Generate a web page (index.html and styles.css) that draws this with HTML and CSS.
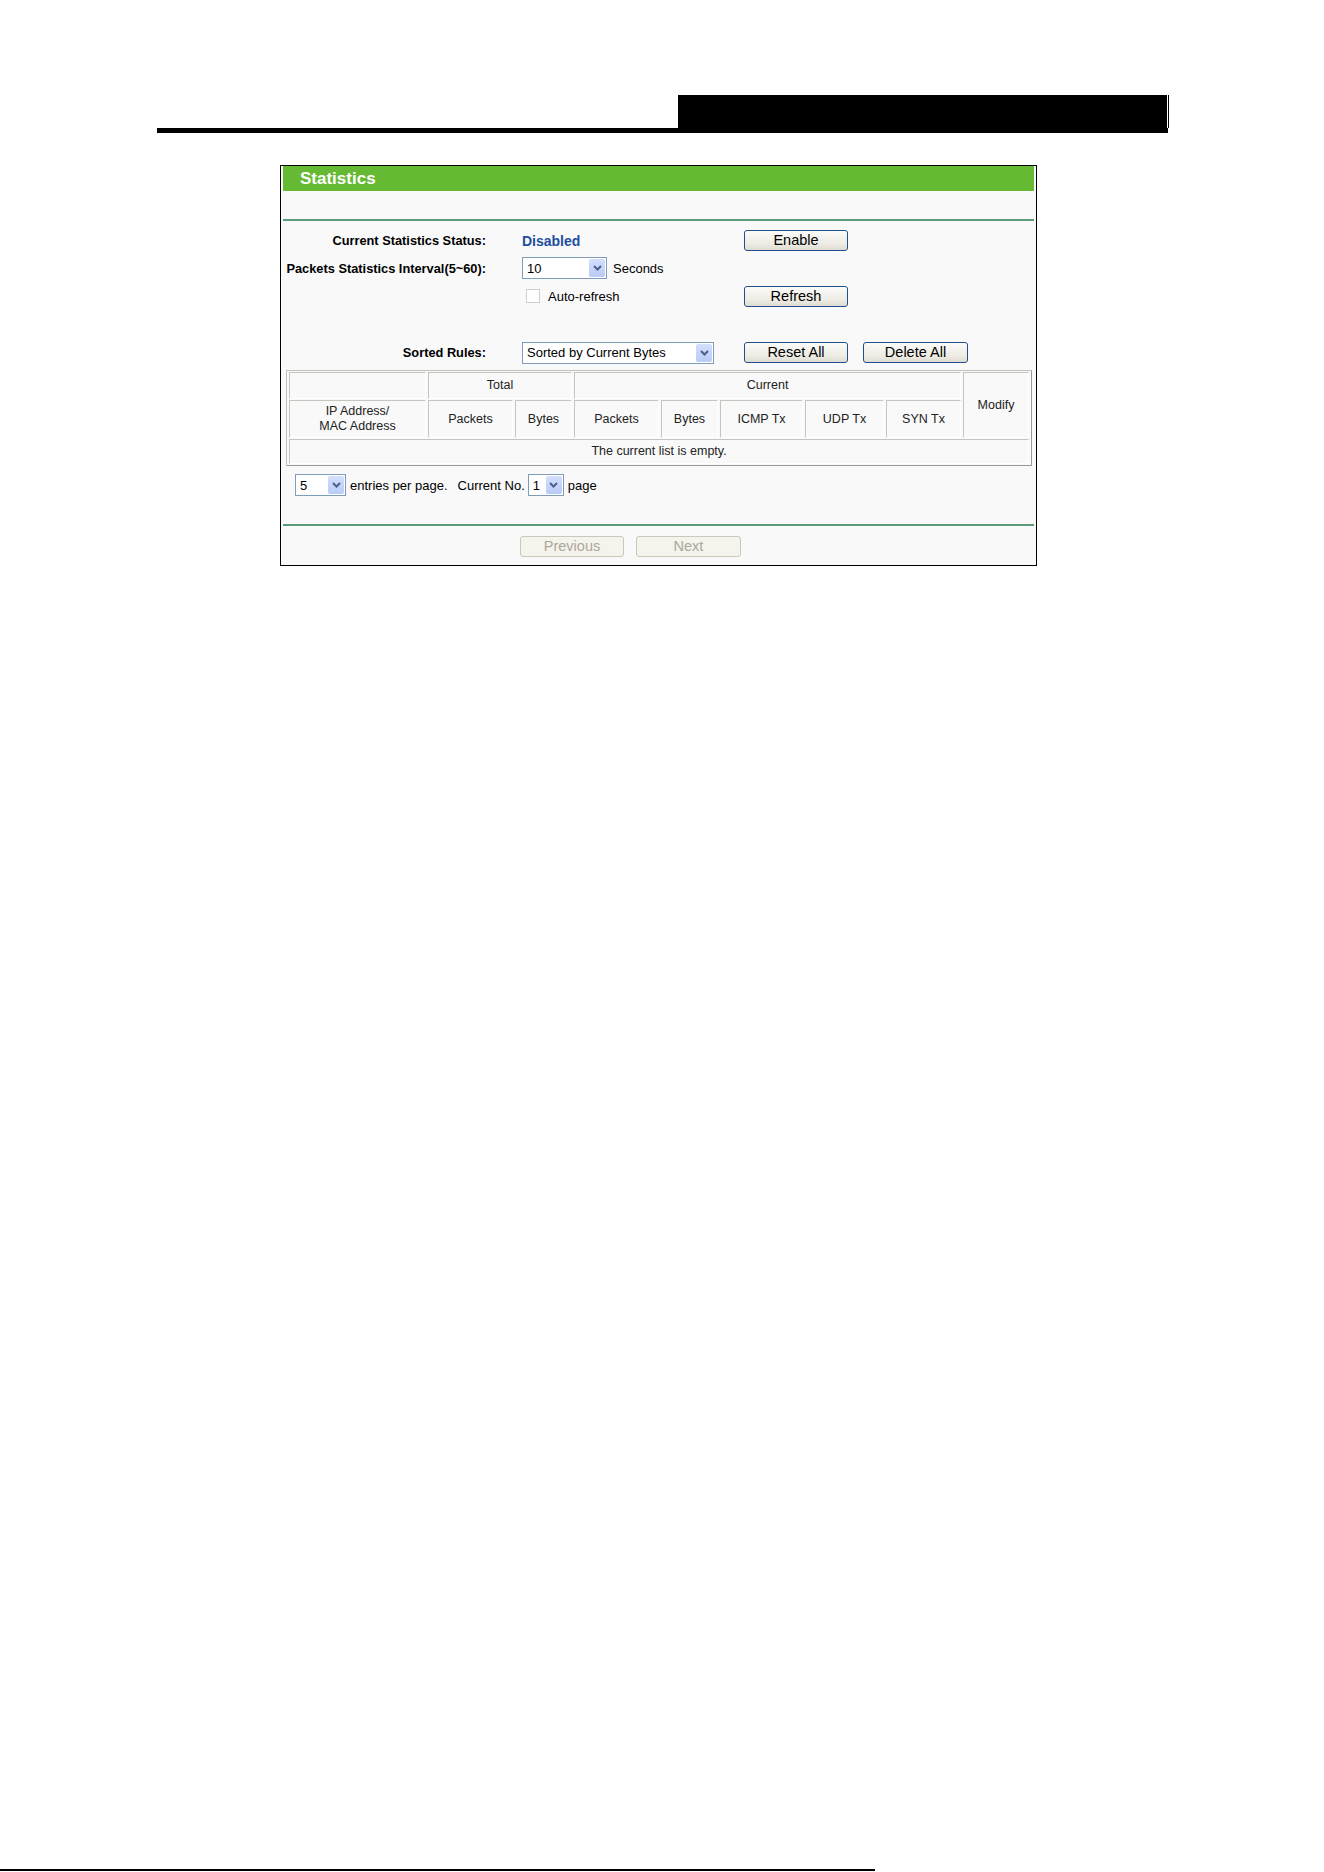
FILE: index.html
```html
<!DOCTYPE html>
<html lang="en">
<head>
    <meta charset="UTF-8">
    <meta name="viewport" content="width=device-width, initial-scale=1.0">
    <title>Statistics</title>
    <link rel="stylesheet" href="styles.css">
</head>
<body>
    <div class="doc-head">
        <div class="doc-tab"></div>
    </div>

    <div class="panel">
        <div class="panel-title">Statistics</div>
        <div class="divider"></div>

        <div class="form">
            <div class="label">Current Statistics Status:</div>
            <div class="value"><span class="status">Disabled</span></div>
            <div class="actions"><button class="btn">Enable</button></div>

            <div class="label">Packets Statistics Interval(5~60):</div>
            <div class="value">
                <span class="select sel-interval">
                    <select><option>10</option></select>
                    <span class="arrow"><svg width="9" height="6" viewBox="0 0 9 6"><path d="M1 1 L4.5 4.5 L8 1" fill="none" stroke="#4a5f8c" stroke-width="2"/></svg></span>
                </span>
                <span class="unit">Seconds</span>
            </div>
            <div class="actions"></div>

            <div class="label"></div>
            <div class="value">
                <input type="checkbox" class="check" id="auto-refresh">
                <label for="auto-refresh" class="check-label">Auto-refresh</label>
            </div>
            <div class="actions"><button class="btn">Refresh</button></div>

            <div class="spacer"></div>

            <div class="label">Sorted Rules:</div>
            <div class="value">
                <span class="select sel-sort">
                    <select><option>Sorted by Current Bytes</option></select>
                    <span class="arrow"><svg width="9" height="6" viewBox="0 0 9 6"><path d="M1 1 L4.5 4.5 L8 1" fill="none" stroke="#4a5f8c" stroke-width="2"/></svg></span>
                </span>
            </div>
            <div class="actions">
                <button class="btn">Reset All</button>
                <button class="btn btn-wide">Delete All</button>
            </div>
        </div>

        <table class="stats">
            <colgroup>
                <col class="c-addr">
                <col class="c-pk">
                <col class="c-by">
                <col class="c-pk">
                <col class="c-by">
                <col class="c-icmp">
                <col class="c-udp">
                <col class="c-syn">
                <col>
            </colgroup>
            <tr class="r1">
                <th></th>
                <th colspan="2">Total</th>
                <th colspan="5">Current</th>
                <th rowspan="2">Modify</th>
            </tr>
            <tr class="r2">
                <th>IP Address/<br>MAC Address</th>
                <th>Packets</th>
                <th>Bytes</th>
                <th>Packets</th>
                <th>Bytes</th>
                <th>ICMP Tx</th>
                <th>UDP Tx</th>
                <th>SYN Tx</th>
            </tr>
            <tr class="r3">
                <td colspan="9">The current list is empty.</td>
            </tr>
        </table>

        <div class="pager">
            <span class="select sel-rows">
                <select><option>5</option></select>
                <span class="arrow"><svg width="9" height="6" viewBox="0 0 9 6"><path d="M1 1 L4.5 4.5 L8 1" fill="none" stroke="#4a5f8c" stroke-width="2"/></svg></span>
            </span>
            <span class="pager-text">entries per page.</span>
            <span class="pager-text pager-current">Current No.</span>
            <span class="select sel-page">
                <select><option>1</option></select>
                <span class="arrow"><svg width="9" height="6" viewBox="0 0 9 6"><path d="M1 1 L4.5 4.5 L8 1" fill="none" stroke="#4a5f8c" stroke-width="2"/></svg></span>
            </span>
            <span class="pager-text">page</span>
        </div>

        <div class="divider divider-bottom"></div>

        <div class="nav">
            <button class="btn" disabled>Previous</button>
            <button class="btn btn-wide" disabled>Next</button>
        </div>
    </div>

    <div class="doc-foot"></div>
</body>
</html>
```

FILE: styles.css
```css
* {
    box-sizing: border-box;
}

body {
    margin: 0;
    height: 1872px;
    display: flex;
    flex-direction: column;
    align-items: flex-start;
    background-color: #fff;
    font-family: 'Liberation Sans', Arial, sans-serif;
    font-size: 13px;
    color: #000;
    overflow: hidden;
}

/* page header: thick rule with a black tab on the right */
.doc-head {
    margin: 95px 0 0 157px;
    width: 1011px;
    height: 38px;
    border-bottom: 5px solid #000;
    display: flex;
    justify-content: flex-end;
}

.doc-tab {
    width: 490px;
    height: 33px;
    background-color: #000;
    border-right: 1px solid #fff;
    box-shadow: 1px 0 0 #000;
}

.panel {
    margin: 32px 0 0 280px;
    width: 757px;
    border: 1px solid #000;
    background-color: #f9f9f9;
    padding: 0 2px 8px 2px;
}

.panel-title {
    height: 25px;
    background-color: #66b933;
    color: #fff;
    font-size: 17px;
    font-weight: bold;
    padding-left: 17px;
    line-height: 25px;
}

.divider {
    margin-top: 28px;
    height: 2px;
    background-color: #5a9d78;
}

.divider-bottom {
    margin-top: 27px;
}

/* settings form */
.form {
    display: grid;
    grid-template-columns: 203px 258px 1fr;
    grid-template-rows: 23px 24px 24px 25px 23px;
    row-gap: 4px;
    padding-top: 8px;
    align-items: center;
}

.label {
    text-align: right;
    font-weight: bold;
    font-size: 12.8px;
    white-space: nowrap;
}

.value {
    padding-left: 36px;
    display: flex;
    align-items: center;
}

.actions {
    display: flex;
    align-items: center;
    gap: 15px;
}

.spacer {
    grid-column: 1 / -1;
}

.status {
    color: #1d4ea0;
    font-weight: bold;
    font-size: 14px;
}

.unit {
    margin-left: 6px;
}

.check {
    appearance: none;
    width: 14px;
    height: 14px;
    margin: 0 0 0 4px;
    border: 1px solid #cfcfcf;
    background-color: #fff;
}

.check-label {
    margin-left: 8px;
}

/* XP style push buttons */
.btn {
    width: 104px;
    height: 21px;
    padding: 0;
    border: 1px solid #1f4f8a;
    border-radius: 3px;
    background: linear-gradient(#fbfbf9, #eceae2 70%, #dedcd2);
    font-family: 'Liberation Sans', Arial, sans-serif;
    font-size: 14.5px;
    color: #000;
    line-height: 19px;
}

.btn-wide {
    width: 105px;
}

.btn:disabled {
    border-color: #cac8bb;
    background: #f4f3ec;
    color: #aca899;
}

/* drop-down lists */
.select {
    position: relative;
    display: inline-block;
    height: 22px;
}

.select select {
    appearance: none;
    width: 100%;
    height: 22px;
    margin: 0;
    padding: 0 0 0 4px;
    border: 1px solid #7f9db9;
    border-radius: 0;
    background-color: #fff;
    font-family: 'Liberation Sans', Arial, sans-serif;
    font-size: 13px;
    color: #000;
}

.select .arrow {
    position: absolute;
    top: 2px;
    right: 2px;
    bottom: 2px;
    width: 16px;
    border-radius: 2px;
    background: linear-gradient(#d3dffc, #b9cbf6);
    display: flex;
    align-items: center;
    justify-content: center;
}

.sel-interval { width: 85px; }
.sel-sort { width: 192px; }
.sel-rows { width: 51px; }
.sel-page { width: 36px; }

/* statistics table */
.stats {
    margin: 6px 0 0 3px;
    width: 746px;
    table-layout: fixed;
    border-collapse: separate;
    border-spacing: 2px 1px;
    border: 1px solid;
    border-color: #c2c2ba #9c9c94 #9c9c94 #c2c2ba;
    font-size: 12.5px;
    color: #222;
}

.stats th,
.stats td {
    padding: 0;
    font-weight: normal;
    text-align: center;
    border: 1px solid;
    border-color: #c6c6be #ffffff #ffffff #c6c6be;
    line-height: 15px;
}

.c-addr { width: 137px; }
.c-pk { width: 85px; }
.c-by { width: 57px; }
.c-icmp { width: 83px; }
.c-udp { width: 79px; }
.c-syn { width: 75px; }

.r1 { height: 27px; }
.r2 { height: 38px; }
.r3 { height: 25px; }

.pager {
    margin: 7px 0 0 12px;
    height: 24px;
    display: flex;
    align-items: center;
}

.pager-text {
    margin-left: 4px;
}

.pager-current {
    margin-left: 10px;
    margin-right: 3px;
}

.nav {
    margin: 10px 0 0 237px;
    display: flex;
    gap: 12px;
}

/* page footer rule */
.doc-foot {
    margin-top: auto;
    margin-bottom: 1px;
    width: 875px;
    height: 2px;
    background-color: #000;
}
```
